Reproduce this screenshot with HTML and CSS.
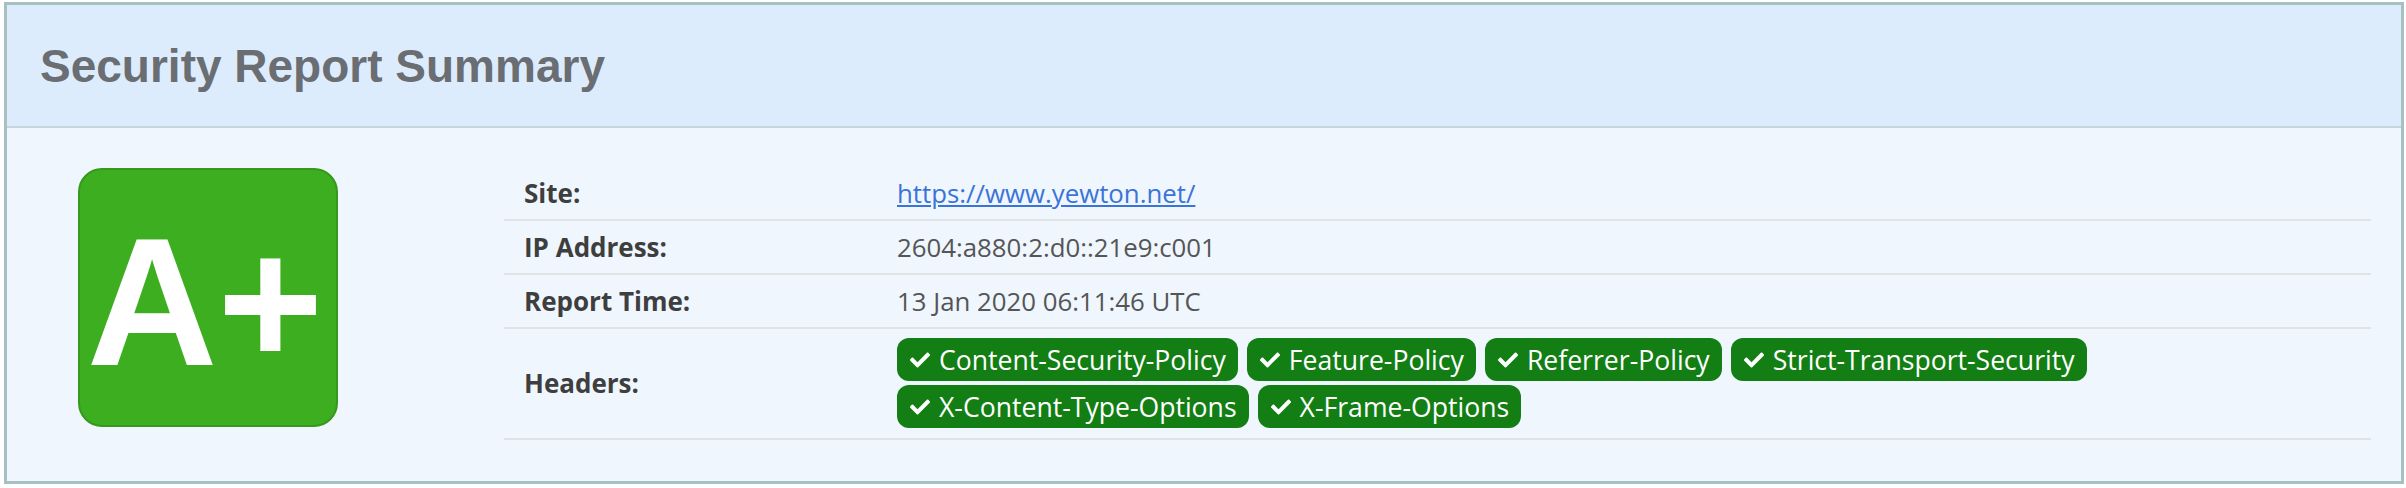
FILE: index.html
```html
<!DOCTYPE html>
<html>
<head>
<meta charset="utf-8">
<link rel="stylesheet" href="styles.css">
</head>
<body>
<div class="card">
  <div class="card-header"><h1 class="title">Security Report Summary</h1></div>
  <div class="card-body">
    <div class="grade-col">
      <div class="grade">A+</div>
    </div>
    <div class="report">
      <div class="row">
        <div class="label">Site:</div>
        <div class="value"><a href="#" class="link">https://www.yewton.net/</a></div>
      </div>
      <div class="row">
        <div class="label">IP Address:</div>
        <div class="value">2604:a880:2:d0::21e9:c001</div>
      </div>
      <div class="row">
        <div class="label">Report Time:</div>
        <div class="value">13 Jan 2020 06:11:46 UTC</div>
      </div>
      <div class="row row-headers">
        <div class="label">Headers:</div>
        <div class="value tags">
          <span class="tag"><svg class="check" viewBox="0 0 512 512"><path d="M173.898 439.404l-166.4-166.4c-9.997-9.997-9.997-26.206 0-36.204l36.203-36.204c9.997-9.998 26.207-9.998 36.204 0L192 312.69 432.095 72.596c9.997-9.997 26.207-9.997 36.204 0l36.203 36.204c9.997 9.997 9.997 26.206 0 36.204l-294.4 294.401c-9.998 9.997-26.207 9.997-36.204-.001z"/></svg>Content-Security-Policy</span>
          <span class="tag"><svg class="check" viewBox="0 0 512 512"><path d="M173.898 439.404l-166.4-166.4c-9.997-9.997-9.997-26.206 0-36.204l36.203-36.204c9.997-9.998 26.207-9.998 36.204 0L192 312.69 432.095 72.596c9.997-9.997 26.207-9.997 36.204 0l36.203 36.204c9.997 9.997 9.997 26.206 0 36.204l-294.4 294.401c-9.998 9.997-26.207 9.997-36.204-.001z"/></svg>Feature-Policy</span>
          <span class="tag"><svg class="check" viewBox="0 0 512 512"><path d="M173.898 439.404l-166.4-166.4c-9.997-9.997-9.997-26.206 0-36.204l36.203-36.204c9.997-9.998 26.207-9.998 36.204 0L192 312.69 432.095 72.596c9.997-9.997 26.207-9.997 36.204 0l36.203 36.204c9.997 9.997 9.997 26.206 0 36.204l-294.4 294.401c-9.998 9.997-26.207 9.997-36.204-.001z"/></svg>Referrer-Policy</span>
          <span class="tag"><svg class="check" viewBox="0 0 512 512"><path d="M173.898 439.404l-166.4-166.4c-9.997-9.997-9.997-26.206 0-36.204l36.203-36.204c9.997-9.998 26.207-9.998 36.204 0L192 312.69 432.095 72.596c9.997-9.997 26.207-9.997 36.204 0l36.203 36.204c9.997 9.997 9.997 26.206 0 36.204l-294.4 294.401c-9.998 9.997-26.207 9.997-36.204-.001z"/></svg>Strict-Transport-Security</span>
          <span class="tag"><svg class="check" viewBox="0 0 512 512"><path d="M173.898 439.404l-166.4-166.4c-9.997-9.997-9.997-26.206 0-36.204l36.203-36.204c9.997-9.998 26.207-9.998 36.204 0L192 312.69 432.095 72.596c9.997-9.997 26.207-9.997 36.204 0l36.203 36.204c9.997 9.997 9.997 26.206 0 36.204l-294.4 294.401c-9.998 9.997-26.207 9.997-36.204-.001z"/></svg>X-Content-Type-Options</span>
          <span class="tag"><svg class="check" viewBox="0 0 512 512"><path d="M173.898 439.404l-166.4-166.4c-9.997-9.997-9.997-26.206 0-36.204l36.203-36.204c9.997-9.998 26.207-9.998 36.204 0L192 312.69 432.095 72.596c9.997-9.997 26.207-9.997 36.204 0l36.203 36.204c9.997 9.997 9.997 26.206 0 36.204l-294.4 294.401c-9.998 9.997-26.207 9.997-36.204-.001z"/></svg>X-Frame-Options</span>
        </div>
      </div>
    </div>
  </div>
</div>
</body>
</html>
```

FILE: styles.css
```css
html, body {
  margin: 0;
  padding: 0;
  background: #ffffff;
}
body {
  padding: 2px 2px 4px 4px;
  font-family: "Open Sans", "Noto Sans", sans-serif;
}
.card {
  box-sizing: border-box;
  width: 2400px;
  height: 482px;
  border: 3px solid #a8c0c2;
  background: #eff6fe;
  display: flex;
  flex-direction: column;
}
.card-header {
  flex-shrink: 0;
  height: 121px;
  background: #ddecfd;
  border-bottom: 2px solid #c4d5dc;
  display: flex;
  align-items: center;
  padding-left: 33px;
}
.title {
  margin: 0;
  font-family: "Liberation Sans", Arial, sans-serif;
  font-weight: bold;
  font-size: 46px;
  color: #6a6d72;
  line-height: 1;
}
.card-body {
  display: flex;
  align-items: flex-start;
  padding: 39px 30px 0 71px;
}
.grade-col {
  flex-shrink: 0;
  width: 260px;
  margin-right: 166px;
  padding-top: 1px;
}
.grade {
  box-sizing: border-box;
  width: 260px;
  height: 259px;
  border: 2px solid #36991c;
  border-radius: 24px;
  background: #3dae20;
  color: #ffffff;
  font-family: "Liberation Sans", Arial, sans-serif;
  font-weight: bold;
  font-size: 181px;
  line-height: 1;
  display: flex;
  align-items: center;
  justify-content: center;
  padding-top: 10px;
  padding-right: 6px;
}
.report {
  flex: 1;
}
.row {
  display: grid;
  grid-template-columns: 373px 1fr;
  align-items: center;
  height: 52px;
  border-bottom: 2px solid #dfe3e6;
}
.row-headers {
  height: auto;
  padding: 9px 0 10px;
}
.label {
  padding-left: 20px;
  font-weight: bold;
  font-size: 26px;
  color: #3e3e3e;
}
.value {
  padding-left: 20px;
  font-size: 25.8px;
  color: #555555;
}
.link {
  color: #3a74d8;
  text-decoration: underline;
}
.tags {
  display: flex;
  flex-wrap: wrap;
  gap: 4px 9px;
}
.tag {
  display: inline-flex;
  align-items: center;
  height: 43px;
  padding: 0 12px 0 13px;
  border-radius: 12px;
  background: #127e14;
  color: #ffffff;
  font-size: 26.6px;
}
.check {
  width: 20px;
  height: 20px;
  fill: #ffffff;
  margin-right: 9px;
}
```
